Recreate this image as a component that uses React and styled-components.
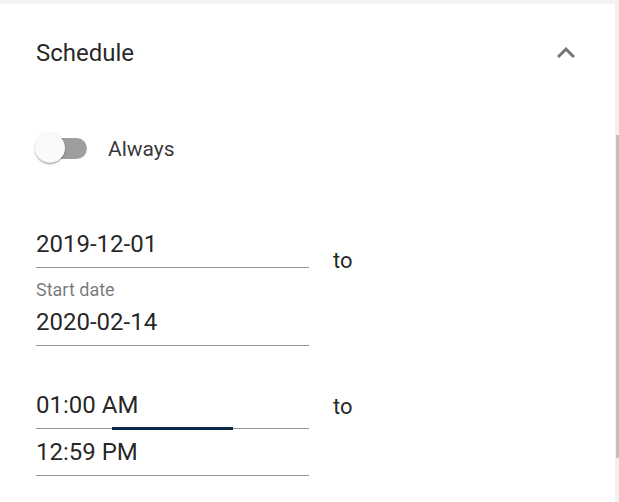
import React from 'react'
import styled, { createGlobalStyle } from 'styled-components'

const GlobalStyle = createGlobalStyle`
  html, body {
    margin: 0;
    padding: 0;
    background: #ffffff;
  }
  body {
    font-family: Roboto, 'Noto Sans', Arial, sans-serif;
    color: rgba(0, 0, 0, 0.87);
  }
`

const Page = styled.div`
  display: flex;
  width: 619px;
  height: 502px;
  overflow: hidden;
`

const Panel = styled.div`
  flex: 1;
  display: flex;
  flex-direction: column;
  min-width: 0;
`

const TopBand = styled.div`
  height: 4px;
  background: #f3f3f3;
`

const Header = styled.div`
  height: 96px;
  box-sizing: border-box;
  padding: 2px 31px 0 36px;
  display: flex;
  align-items: center;
  justify-content: space-between;
`

const Title = styled.div`
  font-size: 24px;
  line-height: 28px;
  color: rgba(0, 0, 0, 0.87);
`

const Chevron = styled.svg`
  width: 36px;
  height: 36px;
  fill: rgba(0, 0, 0, 0.54);
  display: block;
`

const Body = styled.div`
  padding: 33px 36px 0;
  display: flex;
  flex-direction: column;
`

const ToggleRow = styled.div`
  display: flex;
  align-items: center;
  height: 30px;
`

const Switch = styled.div`
  position: relative;
  width: 52px;
  height: 30px;
  margin-left: -1px;
`

const Track = styled.div`
  position: absolute;
  left: 1px;
  top: 4.5px;
  width: 51px;
  height: 21px;
  border-radius: 10.5px;
  background: #9e9e9e;
`

const Thumb = styled.div`
  position: absolute;
  left: 0;
  top: 0;
  width: 30px;
  height: 30px;
  border-radius: 50%;
  background: #fafafa;
  box-shadow: 0 1px 3px rgba(0, 0, 0, 0.2), 0 1px 1px rgba(0, 0, 0, 0.14),
    0 2px 1px -1px rgba(0, 0, 0, 0.12);
`

const ToggleLabel = styled.span`
  margin-left: 21px;
  margin-top: 2px;
  font-size: 21px;
  line-height: 24px;
  color: rgba(0, 0, 0, 0.8);
`

const Group = styled.div`
  display: flex;
  align-items: flex-start;
  margin-top: ${(p) => p.$gap}px;
`

const Fields = styled.div`
  width: 273px;
  display: flex;
  flex-direction: column;
`

const Field = styled.div`
  position: relative;
  margin-top: ${(p) => p.$top || 0}px;
  padding-bottom: 9px;
  border-bottom: 1px solid rgba(0, 0, 0, 0.42);
  font-size: 24px;
  line-height: 28px;
  color: rgba(0, 0, 0, 0.87);
`

const FocusBar = styled.div`
  position: absolute;
  left: 76px;
  bottom: -2px;
  width: 121px;
  height: 3px;
  background: #0a2a47;
`

const FieldLabel = styled.div`
  margin-top: 11px;
  font-size: 18px;
  line-height: 21px;
  color: rgba(0, 0, 0, 0.54);
`

const To = styled.div`
  margin-left: 24px;
  margin-top: ${(p) => p.$top}px;
  font-size: 22px;
  line-height: 26px;
  color: rgba(0, 0, 0, 0.87);
`

const Scrollbar = styled.div`
  width: 4px;
  height: 100%;
  background: #f1f1f1;
  display: flex;
  justify-content: flex-end;
  padding-top: 135px;
  box-sizing: border-box;
`

const ScrollThumb = styled.div`
  width: 3px;
  height: 323px;
  background: #c1c1c1;
`

export default function App() {
  return (
    <>
      <GlobalStyle />
      <Page>
        <Panel>
          <TopBand />
          <Header>
            <Title>Schedule</Title>
            <Chevron viewBox="0 0 24 24">
              <path d="M12 8l-6 6 1.41 1.41L12 10.83l4.59 4.58L18 14z" />
            </Chevron>
          </Header>
          <Body>
            <ToggleRow>
              <Switch>
                <Track />
                <Thumb />
              </Switch>
              <ToggleLabel>Always</ToggleLabel>
            </ToggleRow>

            <Group $gap={67}>
              <Fields>
                <Field>2019-12-01</Field>
                <FieldLabel>Start date</FieldLabel>
                <Field $top={8}>2020-02-14</Field>
              </Fields>
              <To $top={18}>to</To>
            </Group>

            <Group $gap={45}>
              <Fields>
                <Field>
                  01:00 AM
                  <FocusBar />
                </Field>
                <Field $top={9}>12:59 PM</Field>
              </Fields>
              <To $top={3}>to</To>
            </Group>
          </Body>
        </Panel>
        <Scrollbar>
          <ScrollThumb />
        </Scrollbar>
      </Page>
    </>
  )
}
